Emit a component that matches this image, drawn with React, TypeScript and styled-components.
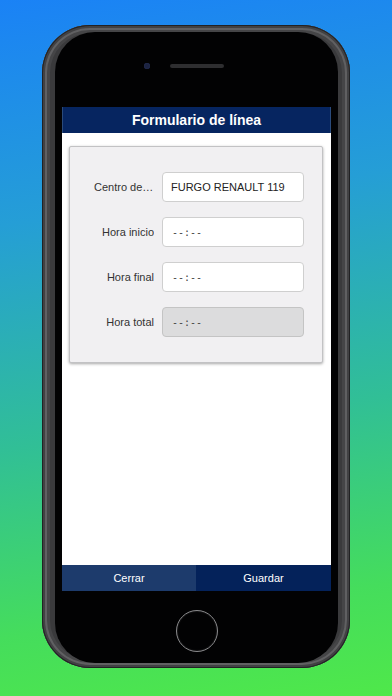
import React from "react";
import styled, { createGlobalStyle } from "styled-components";

const Global = createGlobalStyle`
  html, body { margin: 0; padding: 0; }
  body {
    width: 392px;
    height: 696px;
    overflow: hidden;
    font-family: "Liberation Sans", Arial, sans-serif;
  }
`;

const Page = styled.div`
  width: 392px;
  height: 696px;
  box-sizing: border-box;
  padding: 25px 0 0 42px;
  background: linear-gradient(172deg, #1a82f6 0%, #259ed6 30%, #31bf96 60%, #45dd5c 85%, #4fe84a 100%);
  display: flex;
  align-items: flex-start;
`;

const Phone = styled.div`
  width: 308px;
  height: 643px;
  box-sizing: border-box;
  padding: 7px 12px 5px 13px;
  border-radius: 48px;
  background: #3a3a3c;
  box-shadow: inset 0 0 0 1px #222224, inset 0 0 0 3px #414143, inset 0 0 0 5px #606062, inset 0 0 0 8px #454547;
  display: flex;
`;

const Bezel = styled.div`
  flex: 1;
  background: #020203;
  border-radius: 40px;
  padding: 0 7px;
  display: flex;
  flex-direction: column;
`;

const TopBar = styled.div`
  height: 75px;
  display: flex;
  align-items: center;
  justify-content: center;
  gap: 20px;
  padding-right: 25px;
  padding-bottom: 7px;
  box-sizing: border-box;
`;

const Camera = styled.div`
  width: 6px;
  height: 6px;
  border-radius: 50%;
  background: #1c2340;
  box-shadow: inset 0 0 1px #3a4a80;
`;

const Earpiece = styled.div`
  width: 54px;
  height: 4px;
  border-radius: 2px;
  background: #2e2e30;
`;

const Screen = styled.div`
  height: 484px;
  background: #ffffff;
  display: flex;
  flex-direction: column;
`;

const Header = styled.div`
  height: 26px;
  background: #062560;
  color: #fff;
  font-weight: bold;
  font-size: 14px;
  display: flex;
  align-items: center;
  justify-content: center;
  border-left: 1px solid #2a4a7a;
  border-right: 1px solid #2a4a7a;
`;

const Body = styled.div`
  flex: 1;
  padding: 13px 8px 0 7px;
`;

const Card = styled.div`
  height: 217px;
  box-sizing: border-box;
  background: #f1f0f2;
  border: 1px solid #c2c2c4;
  border-radius: 2px;
  box-shadow: 0 1px 3px rgba(0, 0, 0, 0.35);
  padding: 25px 18px 0 0;
  display: flex;
  flex-direction: column;
  align-items: flex-end;
  gap: 15px;
`;

const Row = styled.div`
  display: flex;
  align-items: center;
  height: 30px;
`;

const Label = styled.div`
  width: 60px;
  margin-right: 8px;
  text-align: right;
  font-size: 11px;
  color: #333;
  white-space: nowrap;
  overflow: hidden;
  text-overflow: ellipsis;
`;

const Field = styled.div<{ $disabled?: boolean }>`
  width: 142px;
  height: 30px;
  box-sizing: border-box;
  border: 1px solid ${(p) => (p.$disabled ? "#c4c4c4" : "#cfcfcf")};
  border-radius: 4px;
  background: ${(p) => (p.$disabled ? "#dcdcdd" : "#ffffff")};
  padding-left: 8px;
  display: flex;
  align-items: center;
  font-size: 11px;
  color: #222;
`;

const TimeText = styled.span`
  font-family: "DejaVu Sans Mono", "Liberation Mono", monospace;
  font-size: 10px;
  color: #444;
  padding-left: 1px;
`;

const Footer = styled.div`
  height: 26px;
  display: grid;
  grid-template-columns: 134px 1fr;
`;

const FooterButton = styled.div<{ $primary?: boolean }>`
  background: ${(p) => (p.$primary ? "#04225a" : "#1d3b6c")};
  color: #fff;
  font-size: 11px;
  display: flex;
  align-items: center;
  justify-content: center;
`;

const BottomBar = styled.div`
  flex: 1;
  display: flex;
  align-items: center;
  justify-content: center;
  padding-top: 8px;
`;

const HomeButton = styled.div`
  width: 40px;
  height: 40px;
  border-radius: 50%;
  border: 1.5px solid #8a8a8c;
  box-shadow: inset 0 0 2px rgba(255, 255, 255, 0.2);
`;

const rows = [
  { label: "Centro de trabajo", value: "FURGO RENAULT 119", time: false },
  { label: "Hora inicio", value: "--:--", time: true },
  { label: "Hora final", value: "--:--", time: true },
  { label: "Hora total", value: "--:--", time: true, disabled: true },
];

export default function App() {
  return (
    <>
      <Global />
      <Page>
        <Phone>
          <Bezel>
            <TopBar>
              <Camera />
              <Earpiece />
            </TopBar>
            <Screen>
              <Header>Formulario de línea</Header>
              <Body>
                <Card>
                  {rows.map((r) => (
                    <Row key={r.label}>
                      <Label>{r.label}</Label>
                      <Field $disabled={r.disabled}>
                        {r.time ? <TimeText>--:--</TimeText> : r.value}
                      </Field>
                    </Row>
                  ))}
                </Card>
              </Body>
              <Footer>
                <FooterButton>Cerrar</FooterButton>
                <FooterButton $primary>Guardar</FooterButton>
              </Footer>
            </Screen>
            <BottomBar>
              <HomeButton />
            </BottomBar>
          </Bezel>
        </Phone>
      </Page>
    </>
  );
}
